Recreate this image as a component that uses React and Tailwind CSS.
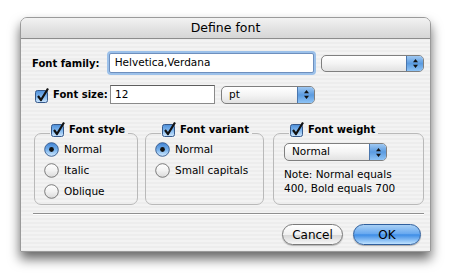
import React from "react";

function Check() {
  return (
    <svg width="16" height="16" viewBox="0 0 16 16" className="shrink-0">
      <defs>
        <linearGradient id="cbg" x1="0" y1="0" x2="0" y2="1">
          <stop offset="0" stopColor="#4d8ed8" />
          <stop offset="0.5" stopColor="#7fb6ee" />
          <stop offset="1" stopColor="#cfe7fd" />
        </linearGradient>
      </defs>
      <rect x="1.5" y="3.5" width="12" height="12" rx="2" fill="url(#cbg)" stroke="#36598a" />
      <path d="M4 9 L7 13 L14 1.5" fill="none" stroke="#111" strokeWidth="2.2" strokeLinejoin="round" />
    </svg>
  );
}

function Radio({ on }) {
  return (
    <svg width="15" height="15" viewBox="0 0 15 15" className="shrink-0">
      <defs>
        <linearGradient id="rOn" x1="0" y1="0" x2="0" y2="1">
          <stop offset="0" stopColor="#3f82d4" />
          <stop offset="0.55" stopColor="#7db5ec" />
          <stop offset="1" stopColor="#d3eaff" />
        </linearGradient>
        <linearGradient id="rOff" x1="0" y1="0" x2="0" y2="1">
          <stop offset="0" stopColor="#ffffff" />
          <stop offset="0.5" stopColor="#f2f2f2" />
          <stop offset="1" stopColor="#d9d9d9" />
        </linearGradient>
      </defs>
      <circle cx="7.5" cy="7.5" r="6.8" fill={on ? "url(#rOn)" : "url(#rOff)"} stroke={on ? "#33588c" : "#6d6d6d"} strokeWidth="0.9" />
      {on && <circle cx="7.5" cy="7.5" r="2.4" fill="#111" />}
    </svg>
  );
}

function Popup({ label, w, h = "h-[18px]" }) {
  return (
    <div className={`flex ${w} ${h} rounded-[5px] border border-[#7f7f7f] bg-[linear-gradient(#ffffff,#f4f4f4_50%,#e2e2e2)] overflow-hidden`}>
      <div className="flex-1 flex items-center pl-[7px] text-[10.5px] text-black">{label}</div>
      <div className="w-[17px] flex items-center justify-center border-l border-[#4a76ad] bg-[linear-gradient(#9fc8f2,#5b9be0_50%,#8ec3f5)]">
        <svg width="7" height="11" viewBox="0 0 7 11">
          <path d="M3.5 1 L6 4.2 L1 4.2 Z M3.5 10 L6 6.8 L1 6.8 Z" fill="#111" />
        </svg>
      </div>
    </div>
  );
}

function Group({ title, w, children }) {
  return (
    <fieldset className={`${w} h-[84px] min-w-0 border border-[#b9b9b9] rounded-[7px] px-[9px]`}>
      <legend className="ml-[6px] pr-[3px] pb-[8px] flex items-center gap-[3px] whitespace-nowrap text-[10px] font-bold">
        <Check />
        <span>{title}</span>
      </legend>
      <div className="-mt-[6px]">{children}</div>
    </fieldset>
  );
}

function RadioRow({ on, label }) {
  return (
    <div className="h-[21px] flex items-center gap-[5px] text-[10.5px] whitespace-nowrap">
      <Radio on={on} />
      <span>{label}</span>
    </div>
  );
}

export default function App() {
  return (
    <div
      className="w-[453px] h-[273px] bg-white pl-[20px] pt-[17px] text-black"
      style={{ fontFamily: '"DejaVu Sans", "Open Sans", sans-serif' }}
    >
      <div className="w-[411px] h-[235px] rounded-t-[7px] border border-[#9a9a9a] shadow-[0_7px_12px_rgba(0,0,0,0.6)] overflow-hidden bg-[repeating-linear-gradient(#ededed_0px,#ededed_2px,#f3f3f3_2px,#f3f3f3_4px)]">
        <div className="h-[21px] flex items-center justify-center border-b border-[#8c8c8c] bg-[linear-gradient(#f2f2f2,#e3e3e3_50%,#d6d6d6)] text-[12.5px]">
          Define font
        </div>

        <div className="pl-[11px] pr-[6px]">
          <div className="mt-[14px] flex items-center h-[20px]">
            <span className="w-[77px] text-[10px] font-bold">Font family:</span>
            <div className="w-[206px] h-[20px] rounded-[2px] border border-[#6e8fbd] shadow-[0_0_0_2px_#9cc1ea] bg-white flex items-center pl-[5px] text-[10.5px]">
              Helvetica,Verdana
            </div>
            <div className="ml-[7px]">
              <Popup label="" w="w-[103px]" h="h-[17px]" />
            </div>
          </div>

          <div className="mt-[12px] flex items-center h-[19px]">
            <div className="ml-[2px] flex items-center gap-[3px] w-[76px]">
              <Check />
              <span className="text-[10px] font-bold whitespace-nowrap">Font size:</span>
            </div>
            <div className="w-[105px] h-[19px] border border-[#8a8a8a] border-t-[#5e5e5e] bg-white flex items-center pl-[4px] text-[10.5px]">
              12
            </div>
            <div className="ml-[6px]">
              <Popup label="pt" w="w-[94px]" />
            </div>
          </div>

          <div className="mt-[17px] ml-[2px] flex">
            <Group title="Font style" w="w-[108px]">
              <RadioRow on label="Normal" />
              <RadioRow label="Italic" />
              <RadioRow label="Oblique" />
            </Group>
            <div className="ml-[7px]">
              <Group title="Font variant" w="w-[119px]">
                <RadioRow on label="Normal" />
                <RadioRow label="Small capitals" />
              </Group>
            </div>
            <div className="ml-[9px]">
              <Group title="Font weight" w="w-[151px]">
                <div className="mt-[4px] ml-[1px]">
                  <Popup label="Normal" w="w-[103px]" />
                </div>
                <div className="mt-[6px] ml-[1px] text-[10.5px] leading-[14px] whitespace-nowrap">
                  Note: Normal equals
                  <br />
                  400, Bold equals 700
                </div>
              </Group>
            </div>
          </div>

          <div className="mt-[8px] ml-[1px] w-[391px] border-t border-[#8f8f8f] border-b border-b-white" />

          <div className="mt-[9px] flex justify-end gap-[10px] pr-[3px]">
            <button className="w-[61px] h-[21px] rounded-full border border-[#7a7a7a] bg-[linear-gradient(#ffffff,#f0f0f0_50%,#d8d8d8_55%,#f7f7f7)] text-[12px] shadow-[0_1px_1px_rgba(0,0,0,0.25)]">
              Cancel
            </button>
            <button className="w-[68px] h-[21px] rounded-full border border-[#2f5f9d] bg-[linear-gradient(#a9d0f5,#6aaaf0_45%,#3e8de6_52%,#bfe2ff)] text-[12px] shadow-[0_1px_1px_rgba(0,0,0,0.3)]">
              OK
            </button>
          </div>
        </div>
      </div>
    </div>
  );
}
